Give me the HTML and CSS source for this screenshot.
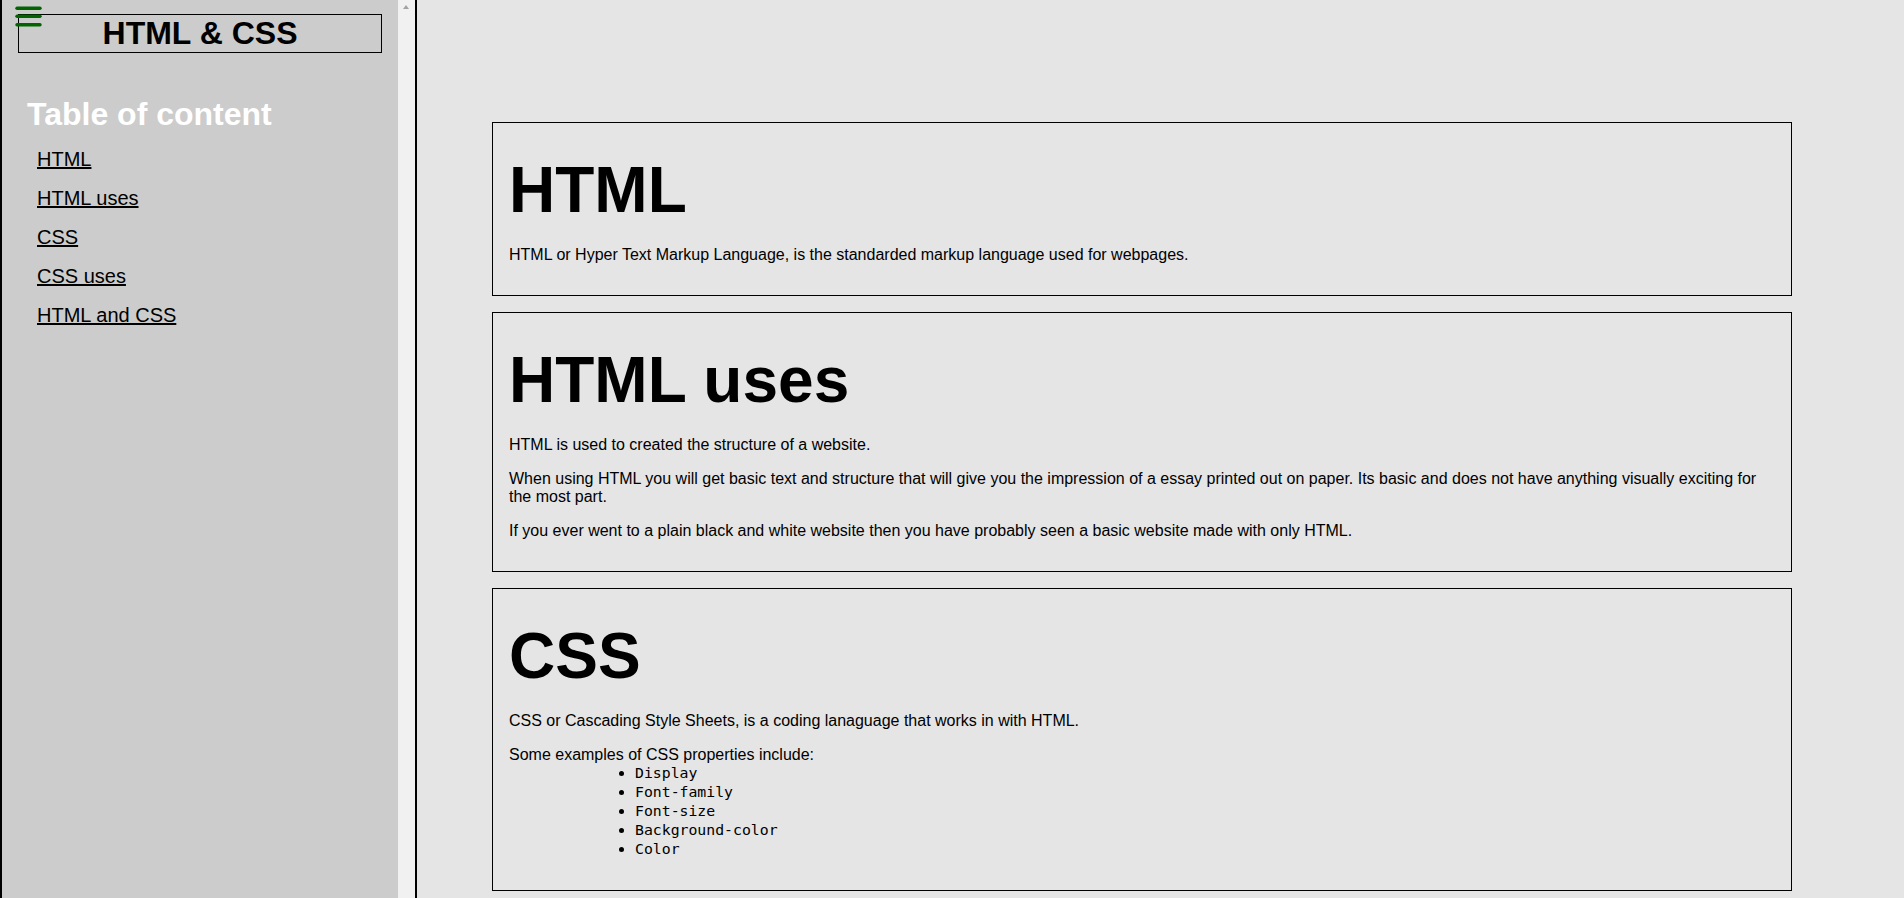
FILE: index.html
```html
<!DOCTYPE html>
<html lang="en">
<head>
<meta charset="utf-8">
<title>HTML &amp; CSS</title>
<link rel="stylesheet" href="styles.css">
</head>
<body>
<div class="page">
  <aside class="sidebar">
    <div class="sidebar-inner">
      <svg class="menu-icon" width="27" height="22" viewBox="0 0 27 22" aria-hidden="true">
        <g stroke="#006400" stroke-width="3.4" stroke-linecap="round">
          <line x1="2" y1="2.3" x2="25" y2="2.3"/>
          <line x1="2" y1="10.3" x2="25" y2="10.3"/>
          <line x1="2" y1="18.7" x2="25" y2="18.7"/>
        </g>
      </svg>
      <header class="site-title">HTML &amp; CSS</header>
      <h2 class="toc-title">Table of content</h2>
      <ul class="toc">
        <li><a href="#html">HTML</a></li>
        <li><a href="#html-uses">HTML uses</a></li>
        <li><a href="#css">CSS</a></li>
        <li><a href="#css-uses">CSS uses</a></li>
        <li><a href="#html-and-css">HTML and CSS</a></li>
      </ul>
    </div>
    <div class="scrollbar"><span class="arrow-up"></span></div>
  </aside>
  <main class="content">
    <section class="card" id="html">
      <h1>HTML</h1>
      <p>HTML or Hyper Text Markup Language, is the standarded markup language used for webpages.</p>
    </section>
    <section class="card" id="html-uses">
      <h1>HTML uses</h1>
      <p>HTML is used to created the structure of a website.</p>
      <p>When using HTML you will get basic text and structure that will give you the impression of a essay printed out on paper. Its basic and does not have anything visually exciting for the most part.</p>
      <p>If you ever went to a plain black and white website then you have probably seen a basic website made with only HTML.</p>
    </section>
    <section class="card" id="css">
      <h1>CSS</h1>
      <p>CSS or Cascading Style Sheets, is a coding lanaguage that works in with HTML.</p>
      <p class="lead-in">Some examples of CSS properties include:</p>
      <ul class="props">
        <li>Display</li>
        <li>Font-family</li>
        <li>Font-size</li>
        <li>Background-color</li>
        <li>Color</li>
      </ul>
    </section>
    <section class="card" id="css-uses">
      <h1>CSS uses</h1>
    </section>
    <section class="card" id="html-and-css">
      <h1>HTML and CSS</h1>
    </section>
  </main>
</div>
</body>
</html>
```
FILE: styles.css
```css
html {
  scrollbar-width: none;
}

body {
  margin: 0;
  font-family: "Liberation Sans", Arial, sans-serif;
  background: #e5e5e5;
  color: #000;
}

.page {
  display: flex;
  align-items: flex-start;
  min-height: 100vh;
}

.sidebar {
  position: sticky;
  top: 0;
  flex: none;
  display: flex;
  height: 100vh;
  border-left: 2px solid #000;
  border-right: 2px solid #000;
  background: #cccccc;
}

.sidebar-inner {
  position: relative;
  width: 396px;
  padding-top: 14px;
}

.menu-icon {
  position: absolute;
  left: 13px;
  top: 6px;
}

.site-title {
  margin: 0 16px;
  border: 1px solid #000;
  text-align: center;
  font-size: 32px;
  font-weight: bold;
  line-height: 37px;
}

.toc-title {
  margin: 43px 0 0 25px;
  font-size: 32px;
  line-height: 37px;
  font-weight: bold;
  color: #fff;
}

.toc {
  list-style: none;
  margin: 15px 0 0;
  padding-left: 35px;
}

.toc li {
  margin-bottom: 16px;
  font-size: 20px;
  line-height: 23px;
}

.toc a {
  color: #000;
  text-decoration: underline;
}

.scrollbar {
  position: relative;
  width: 17px;
  background: #f1f1f1;
}

.arrow-up {
  position: absolute;
  top: 5px;
  left: 5px;
  width: 0;
  height: 0;
  border-left: 3.5px solid transparent;
  border-right: 3.5px solid transparent;
  border-bottom: 4px solid #a3a3a3;
}

.content {
  flex: 1;
  padding: 122px 112px 40px 75px;
}

.card {
  border: 1px solid #000;
  padding: 0 16px 15px;
  margin-bottom: 16px;
}

.card h1 {
  margin: 30px 0 19px;
  font-size: 64px;
  line-height: 74px;
  font-weight: bold;
}

.card p {
  margin: 16px 0;
  font-size: 16px;
  line-height: 18px;
}

.card p.lead-in {
  margin-bottom: 0;
}

.props {
  margin: -1px 0 17px;
  padding-left: 126px;
  font-family: "DejaVu Sans Mono", "Liberation Mono", monospace;
  font-size: 14.8px;
  line-height: 19px;
}
```
